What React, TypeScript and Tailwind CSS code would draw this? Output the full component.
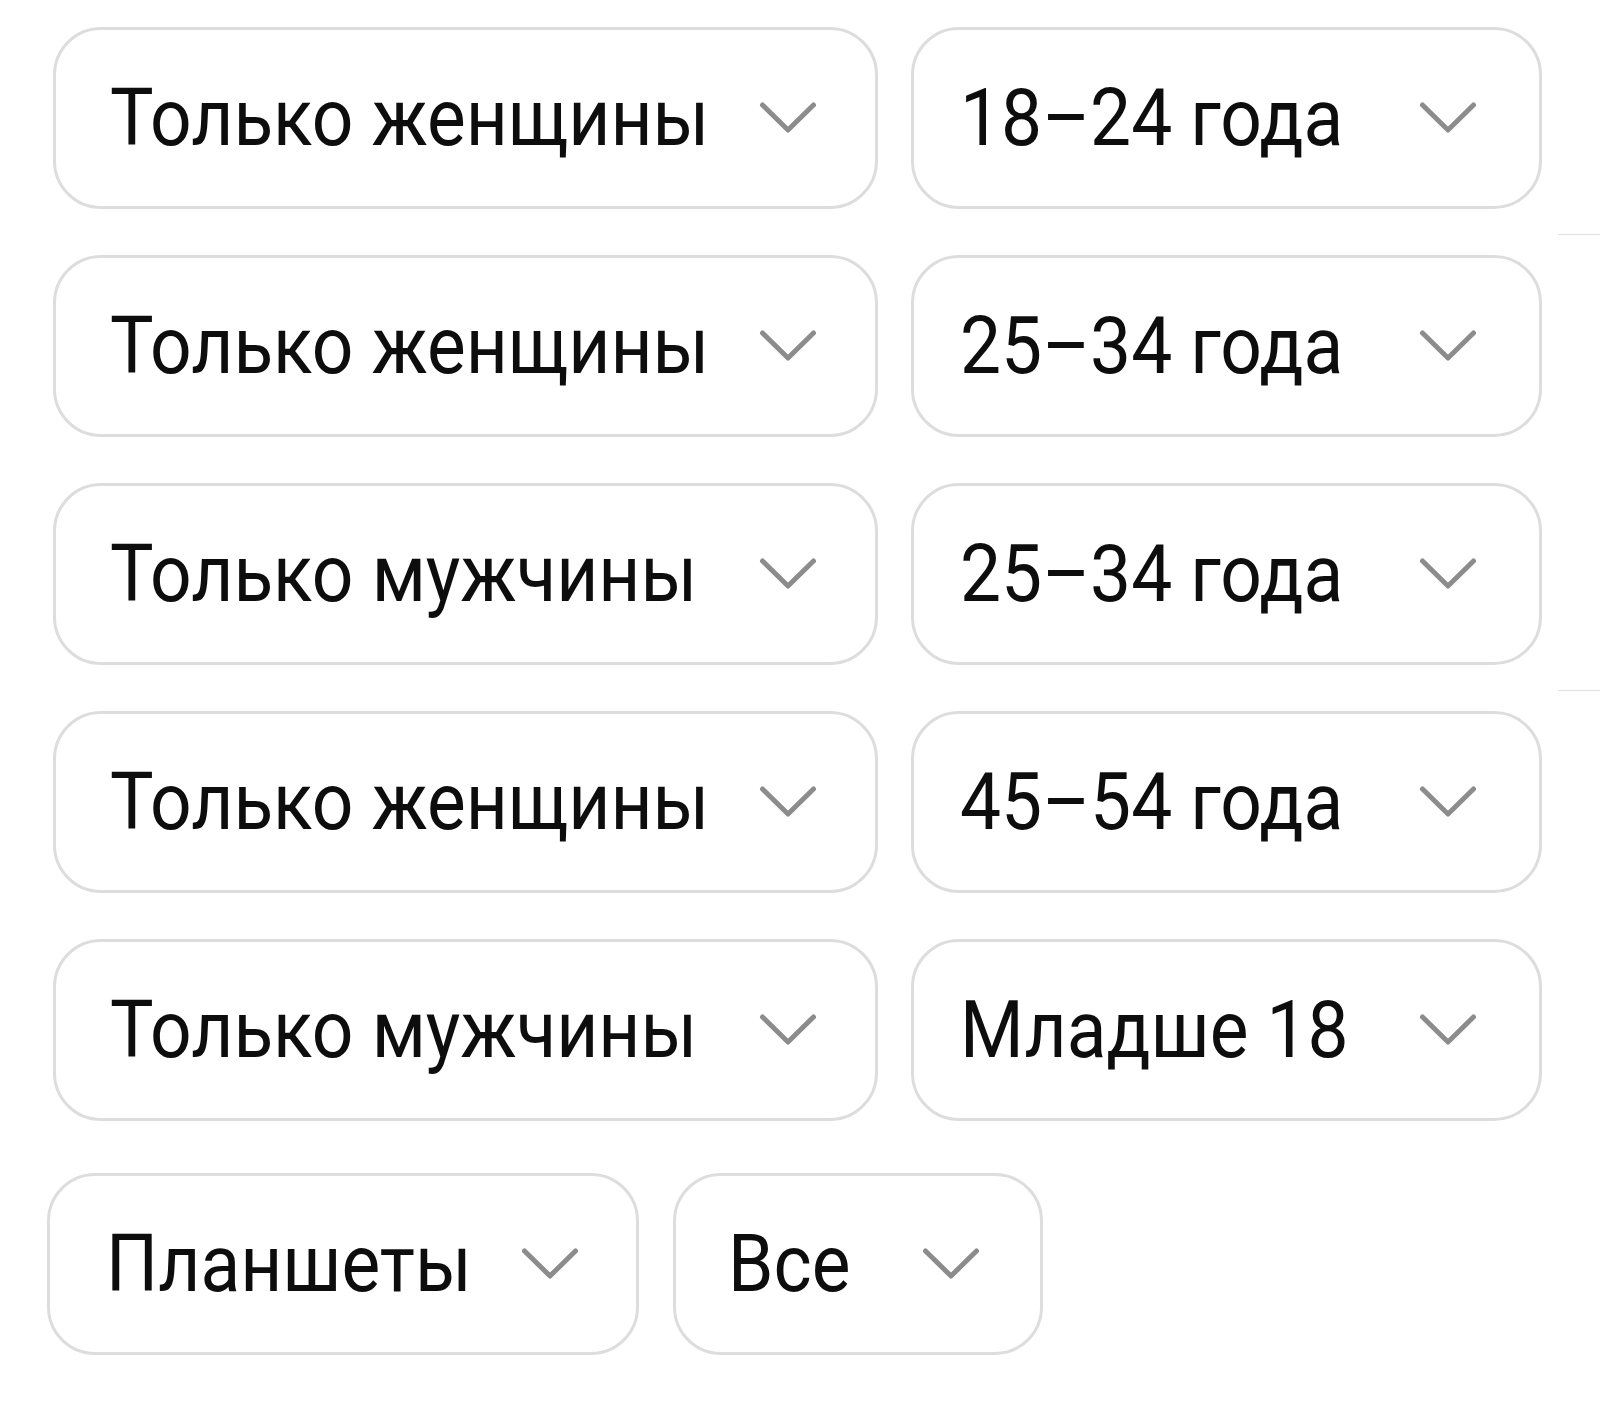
import { ReactNode } from 'react'

type Option = {
  label: string
  width: string
  padLeft: string
  padRight: string
}

const rows: Option[][] = [
  [
    { label: 'Только женщины', width: 'w-[825px]', padLeft: 'pl-[54px]', padRight: 'pr-[58px]' },
    { label: '18–24 года', width: 'w-[631px]', padLeft: 'pl-[46px]', padRight: 'pr-[62px]' },
  ],
  [
    { label: 'Только женщины', width: 'w-[825px]', padLeft: 'pl-[54px]', padRight: 'pr-[58px]' },
    { label: '25–34 года', width: 'w-[631px]', padLeft: 'pl-[46px]', padRight: 'pr-[62px]' },
  ],
  [
    { label: 'Только мужчины', width: 'w-[825px]', padLeft: 'pl-[54px]', padRight: 'pr-[58px]' },
    { label: '25–34 года', width: 'w-[631px]', padLeft: 'pl-[46px]', padRight: 'pr-[62px]' },
  ],
  [
    { label: 'Только женщины', width: 'w-[825px]', padLeft: 'pl-[54px]', padRight: 'pr-[58px]' },
    { label: '45–54 года', width: 'w-[631px]', padLeft: 'pl-[46px]', padRight: 'pr-[62px]' },
  ],
  [
    { label: 'Только мужчины', width: 'w-[825px]', padLeft: 'pl-[54px]', padRight: 'pr-[58px]' },
    { label: 'Младше 18', width: 'w-[631px]', padLeft: 'pl-[46px]', padRight: 'pr-[62px]' },
  ],
]

const lastRow: Option[] = [
  { label: 'Планшеты', width: 'w-[592px]', padLeft: 'pl-[56px]', padRight: 'pr-[57px]' },
  { label: 'Все', width: 'w-[370px]', padLeft: 'pl-[52px]', padRight: 'pr-[60px]' },
]

function Chevron() {
  return (
    <svg width="58" height="34" viewBox="0 0 58 34" fill="none" className="shrink-0">
      <polyline
        points="3.5,4 29,29 54.5,4"
        stroke="#8c8c8c"
        strokeWidth="5"
        strokeLinecap="round"
        strokeLinejoin="round"
      />
    </svg>
  )
}

function Select({ option }: { option: Option }) {
  return (
    <div
      className={`${option.width} ${option.padLeft} ${option.padRight} h-[182px] shrink-0 flex items-center justify-between rounded-[48px] border-[3px] border-[#dddddd] bg-white`}
    >
      {/* шрифт чуть уже обычного Roboto */}
      <span className="origin-left scale-x-[0.925] text-[79px] leading-none text-[#0d0d0d] whitespace-nowrap">
        {option.label}
      </span>
      <Chevron />
    </div>
  )
}

function Row({ children, className }: { children: ReactNode; className?: string }) {
  return <div className={`flex ${className ?? ''}`}>{children}</div>
}

export default function App() {
  return (
    <div
      className="relative min-h-[1416px] w-[1600px] bg-white pt-[27px]"
      style={{ fontFamily: 'Roboto, "Noto Sans", sans-serif' }}
    >
      {/* обрывки разделителей у правого края */}
      <div className="absolute left-[1558px] top-[234px] h-px w-[42px] bg-[#e2e2e2]" />
      <div className="absolute left-[1558px] top-[690px] h-px w-[42px] bg-[#e2e2e2]" />

      <div className="flex flex-col gap-[46px] pl-[53px]">
        {rows.map((pair, i) => (
          <Row key={i} className="gap-[33px]">
            {pair.map((opt, j) => (
              <Select key={j} option={opt} />
            ))}
          </Row>
        ))}
      </div>

      <Row className="mt-[52px] gap-[34px] pl-[47px]">
        {lastRow.map((opt, j) => (
          <Select key={j} option={opt} />
        ))}
      </Row>
    </div>
  )
}
